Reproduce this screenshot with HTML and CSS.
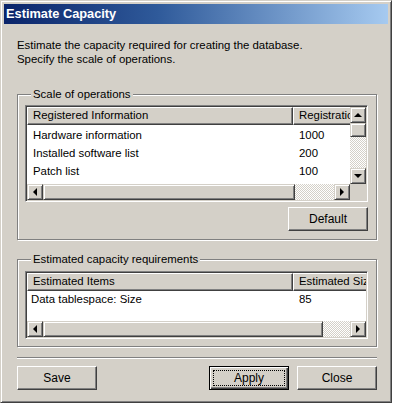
FILE: index.html
```html
<!DOCTYPE html>
<html lang="en">
<head>
<meta charset="utf-8">
<title>Estimate Capacity</title>
<link rel="stylesheet" href="styles.css">
</head>
<body>
<div class="window">
  <div class="titlebar"><span class="title">Estimate Capacity</span></div>
  <div class="content">
    <p class="intro">Estimate the capacity required for creating the database.<br>Specify the scale of operations.</p>

    <fieldset class="group group-scale">
      <legend>Scale of operations</legend>
      <div class="listview lv-scale">
        <div class="lv-main">
          <div class="lv-header">
            <div class="hcell c1">Registered Information</div>
            <div class="hcell c2">Registration</div>
          </div>
          <div class="lv-body">
            <div class="row"><span class="cell c1">Hardware information</span><span class="cell c2">1000</span></div>
            <div class="row"><span class="cell c1">Installed software list</span><span class="cell c2">200</span></div>
            <div class="row"><span class="cell c1">Patch list</span><span class="cell c2">100</span></div>
          </div>
        </div>
        <div class="vscroll">
          <div class="sbtn"><span class="arrow up"></span></div>
          <div class="thumb vthumb"></div>
          <div class="track"></div>
          <div class="sbtn"><span class="arrow down"></span></div>
        </div>
        <div class="hscroll">
          <div class="sbtn"><span class="arrow left"></span></div>
          <div class="thumb hthumb-scale"></div>
          <div class="track"></div>
          <div class="sbtn"><span class="arrow right"></span></div>
        </div>
        <div class="corner"></div>
      </div>
      <div class="group-actions"><button class="btn">Default</button></div>
    </fieldset>

    <fieldset class="group group-est">
      <legend>Estimated capacity requirements</legend>
      <div class="listview lv-est">
        <div class="lv-main">
          <div class="lv-header">
            <div class="hcell c1">Estimated Items</div>
            <div class="hcell c2 c2-wide">Estimated Size</div>
          </div>
          <div class="lv-body">
            <div class="row"><span class="cell c1 tight">Data tablespace: Size</span><span class="cell c2">85</span></div>
          </div>
        </div>
        <div class="hscroll">
          <div class="sbtn"><span class="arrow left"></span></div>
          <div class="thumb hthumb-est"></div>
          <div class="track"></div>
          <div class="sbtn"><span class="arrow right"></span></div>
        </div>
      </div>
    </fieldset>

    <div class="separator"></div>

    <div class="buttons">
      <button class="btn">Save</button>
      <div class="buttons-right">
        <button class="btn btn-default">Apply</button>
        <button class="btn">Close</button>
      </div>
    </div>
  </div>
</div>
</body>
</html>
```

FILE: styles.css
```css
* { box-sizing: border-box; }

body {
  margin: 0;
  background: #ffffff;
  font-family: "Liberation Sans", Arial, sans-serif;
  font-size: 11.4px;
  color: #000;
}

.window {
  width: 392px;
  height: 403px;
  background: #d4d0c8;
  border: 1px solid;
  border-color: #d4d0c8 #404040 #404040 #d4d0c8;
  box-shadow: inset 1px 1px #fff, inset -1px -1px #808080;
  padding: 3px;
  display: flex;
  flex-direction: column;
}

.titlebar {
  height: 20px;
  flex: none;
  background: linear-gradient(90deg, #0a246a 0%, #2f5a9a 40%, #a6caf0 100%);
  display: flex;
  align-items: center;
  padding-left: 2px;
}

.title {
  color: #fff;
  font-family: "Liberation Sans", Arial, sans-serif;
  font-weight: bold;
  font-size: 12.8px;
  line-height: 20px;
}

.content {
  padding: 0 11px 0 13px;
  display: flex;
  flex-direction: column;
}

.intro {
  margin: 14px 0 0 0;
  line-height: 14px;
}

.group {
  margin: 0;
  border: 1px solid #808080;
  box-shadow: inset 1px 1px #fff, 1px 1px #fff;
  padding: 4px 8px 8px 7px;
  min-width: 0;
}

.group legend {
  padding: 0 2px;
  margin-left: 6px;
  line-height: 14px;
  background: #d4d0c8;
}

.group-scale { margin-top: 21px; }
.group-est { margin-top: 12px; padding-top: 5px; padding-bottom: 7px; }

.listview {
  display: grid;
  background: #fff;
  border: 1px solid;
  border-color: #808080 #fff #fff #808080;
  box-shadow: inset 1px 1px #404040, inset -1px -1px #d4d0c8;
  padding: 1px;
}

.lv-scale {
  grid-template-columns: 1fr 16px;
  grid-template-rows: 77px 16px;
}

.lv-est {
  grid-template-columns: 1fr;
  grid-template-rows: 48px 16px;
}

.lv-main {
  overflow: hidden;
  min-width: 0;
}

.lv-header {
  display: flex;
  height: 18px;
  white-space: nowrap;
}

.hcell {
  flex: none;
  background: #d4d0c8;
  border: 1px solid;
  border-color: #fff #404040 #404040 #fff;
  box-shadow: inset -1px -1px #808080;
  padding-left: 5px;
  line-height: 15px;
  overflow: hidden;
}

.c1 { width: 266px; }
.c2 { width: 80px; }

.lv-scale .lv-body { padding-top: 1px; }
.lv-scale .lv-body .row { height: 18px; }
.lv-est .lv-body .row { height: 16px; }

.row {
  display: flex;
  align-items: center;
  white-space: nowrap;
}

.cell { flex: none; padding-left: 6px; }
.cell.tight { padding-left: 4px; }

.vscroll {
  display: flex;
  flex-direction: column;
}

.hscroll {
  display: flex;
  flex-direction: row;
}

.sbtn {
  flex: none;
  width: 16px;
  height: 16px;
  background: #d4d0c8;
  border: 1px solid;
  border-color: #d4d0c8 #404040 #404040 #d4d0c8;
  box-shadow: inset 1px 1px #fff, inset -1px -1px #808080;
  display: flex;
  align-items: center;
  justify-content: center;
}

.thumb {
  flex: none;
  background: #d4d0c8;
  border: 1px solid;
  border-color: #d4d0c8 #404040 #404040 #d4d0c8;
  box-shadow: inset 1px 1px #fff, inset -1px -1px #808080;
}

.vthumb { height: 14px; }
.hthumb-scale { width: 252px; }
.hthumb-est { width: 280px; }

.track {
  flex: 1;
  background-color: #fff;
  background-image: repeating-conic-gradient(#d4d0c8 0 25%, #fff 0 50%);
  background-size: 2px 2px;
}

.corner { background: #d4d0c8; }

.arrow { width: 0; height: 0; display: block; }
.arrow.up { border-left: 4px solid transparent; border-right: 4px solid transparent; border-bottom: 4px solid #000; margin-top: -1px; }
.arrow.down { border-left: 4px solid transparent; border-right: 4px solid transparent; border-top: 4px solid #000; }
.arrow.left { border-top: 4px solid transparent; border-bottom: 4px solid transparent; border-right: 4px solid #000; margin-left: -1px; }
.arrow.right { border-top: 4px solid transparent; border-bottom: 4px solid transparent; border-left: 4px solid #000; }

.group-actions {
  display: flex;
  justify-content: flex-end;
  margin-top: 5px;
}

.btn {
  width: 80px;
  height: 24px;
  padding: 0;
  font: inherit;
  font-size: 12px;
  color: #000;
  background: #d4d0c8;
  border: 1px solid;
  border-color: #fff #404040 #404040 #fff;
  box-shadow: inset -1px -1px #808080;
}

.btn-default {
  border: 1px solid #000;
  box-shadow: inset 1px 1px #fff, inset -1px -1px #404040, inset -2px -2px #808080;
  outline: 1px dotted #000;
  outline-offset: -5px;
}

.separator {
  margin-top: 10px;
  height: 2px;
  border-top: 1px solid #808080;
  border-bottom: 1px solid #fff;
}

.buttons {
  margin-top: 7px;
  display: flex;
  justify-content: space-between;
}

.buttons-right {
  display: flex;
  gap: 8px;
}
```
